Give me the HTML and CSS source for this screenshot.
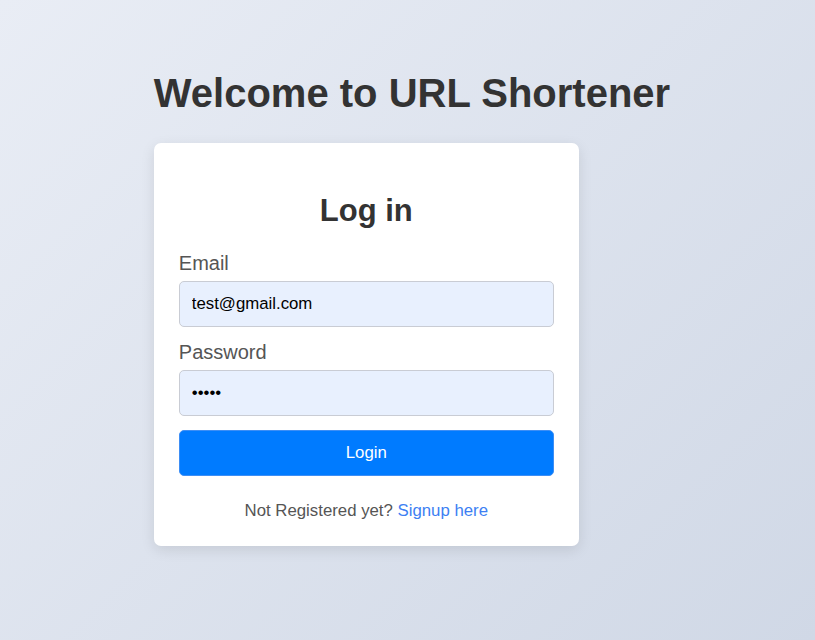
FILE: index.html
```html
<!DOCTYPE html>
<html lang="en">
<head>
  <meta charset="UTF-8" />
  <meta name="viewport" content="width=device-width, initial-scale=1" />
  <title>URL Shortener</title>
  <link rel="stylesheet" href="styles.css">
</head>
<body>

<div class="page">
  <h1>Welcome to URL Shortener</h1>

  <div class="card">
    <h2>Log in</h2>
    <form class="login-form">
      <label for="email">Email</label>
      <input type="email" id="email" value="test@gmail.com" />

      <label for="password">Password</label>
      <input type="password" id="password" value="12345" />

      <button type="button">Login</button>
    </form>
    <p class="signup">Not Registered yet? <a href="#">Signup here</a></p>
  </div>
</div>

</body>
</html>
```

FILE: styles.css
```css
body {
  margin: 0;
  min-height: 100vh;
  background: linear-gradient(135deg, #e9edf5 0%, #d0d8e6 100%);
  font-family: "Liberation Sans", Arial, sans-serif;
  display: flex;
  justify-content: center;
}

.page {
  padding: 71px 0 0 9px;
}

h1 {
  margin: 0 0 27px;
  font-size: 40px;
  color: #333;
  white-space: nowrap;
}

.card {
  width: 375px;
  padding: 25px;
  background: #fff;
  border-radius: 7px;
  box-shadow: 0 4px 14px rgba(0, 0, 0, 0.1);
}

.card h2 {
  margin: 25px 0 23px;
  text-align: center;
  font-size: 31px;
  color: #333;
}

.login-form {
  display: flex;
  flex-direction: column;
}

.login-form label {
  font-size: 20px;
  color: #555;
  margin-bottom: 6px;
}

.login-form input {
  box-sizing: border-box;
  height: 46px;
  font-family: inherit;
  font-size: 16.8px;
  padding: 0 12px;
  border: 1px solid #c9ccd4;
  border-radius: 5px;
  background: #e8f0fe;
  color: #000;
  margin-bottom: 14px;
  outline: none;
}

.login-form button {
  font-family: inherit;
  font-size: 16.8px;
  height: 46px;
  border: 1px solid #3d8ef5;
  border-radius: 5px;
  background: #007bff;
  color: #fff;
  cursor: pointer;
}

.signup {
  margin: 25px 0 0;
  text-align: center;
  font-size: 16.8px;
  color: #555;
}

.signup a {
  color: #3d7ff3;
  text-decoration: none;
}
```
